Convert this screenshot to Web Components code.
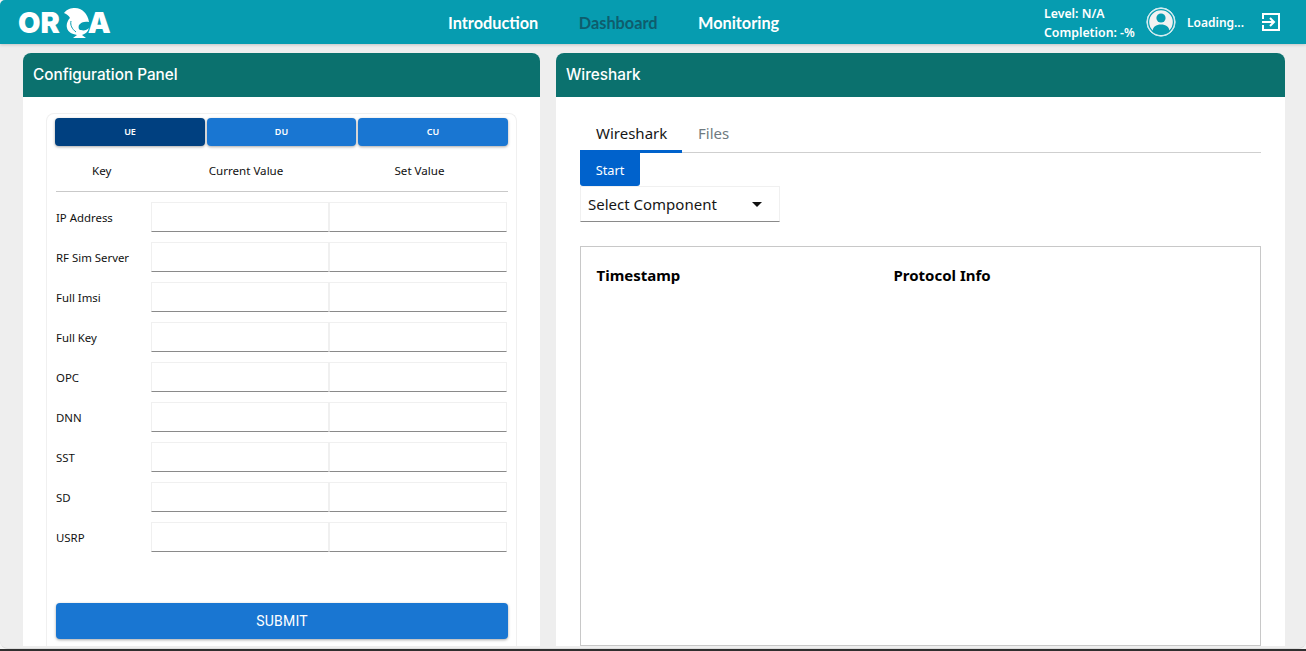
<!DOCTYPE html>
<html>
<head>
<meta charset="utf-8">
<title>ORCA</title>
<style>
 html, body { margin: 0; height: 100%; overflow: hidden; }
 body { font-family: "Noto Sans", sans-serif; background: linear-gradient(#f4f4f4 649px, #2f2f2f 649px); }
</style>
</head>
<body>
<app-shell>
 <top-bar slot="top"></top-bar>
 <panel-card title="Configuration Panel" style="width:517px">
  <config-form></config-form>
 </panel-card>
 <panel-card title="Wireshark" style="width:729px">
  <wireshark-view></wireshark-view>
 </panel-card>
</app-shell>
<script>
// Page frame: top bar plus a row of panels.
class AppShell extends HTMLElement {
 constructor() {
  super();
  this.attachShadow({mode: "open"}).innerHTML = `<style>
   :host { display: flex; flex-direction: column; height: 649px; background: #eeeeee; overflow: hidden;
    border-radius: 5px 0 8px 8px; box-sizing: border-box; border-bottom: 1px solid #dcdcdc; }
   main { display: flex; gap: 16px; padding: 9px 0 2px 23px; flex: 1; min-height: 0; }
  </style>
  <slot name="top"></slot>
  <main><slot></slot></main>`;
 }
}
customElements.define("app-shell", AppShell);

class TopBar extends HTMLElement {
 constructor() {
  super();
  this.attachShadow({mode: "open"}).innerHTML = `<style>
   :host { display: flex; align-items: center; height: 44px; flex: none; background: #069cb0; color: #fff;
    box-shadow: 0 1px 3px rgba(0,0,0,.18); position: relative; z-index: 1; }
   .logo { margin-left: 18px; display: flex; align-items: center; width: 96px; height: 36px; margin-top: 1px;
    font: 900 29px/36px "Inter", sans-serif; }
   .logo svg { display: block; margin: 0 -1px 0 2px; flex: none; }
   nav { position: absolute; left: 448px; top: 0; height: 44px; display: flex; align-items: center; gap: 40.5px;
    font: 700 16.3px Lato, sans-serif; }
   nav a:nth-child(2) { color: #0e5d6d; }
   .right { margin-left: auto; display: flex; align-items: center; font: 600 12px "Noto Sans", sans-serif; }
   .level { line-height: 19px; width: 102px; font-size: 12.3px; padding-top: 2px; }
   .name { margin-left: 11px; width: 75px; }
   .right svg { display: block; }
   .exit { margin-right: 24px; }
  </style>
  <div class="logo">
   <span>OR</span>
   <svg width="27" height="30" viewBox="0 0 27 30">
    <path fill="#fff" d="M2 5C5 1 9 0 13 0C20 0 26 6 27 14C23 13 19 14 17 17C16 20 17 22 19 22C22 23 25 22 27 20C26 24 23 26 20 27L24 30L11 30L15 27C10 26 6 24 5 20C4 16 6 12 8 10C7 8 5 6 2 5Z"/>
    <path fill="none" stroke="#069cb0" stroke-width="1" d="M9 13C8 17 10 21 14 24"/>
   </svg>
   <span>A</span>
  </div>
  <nav><a>Introduction</a><a>Dashboard</a><a>Monitoring</a></nav>
  <div class="right">
   <div class="level">Level: N/A<br>Completion: -%</div>
   <svg width="30" height="30" viewBox="0 0 30 30">
    <circle cx="15" cy="15" r="14.2" fill="#e6f4f6" fill-opacity=".95" stroke="#cfe9ee" stroke-width="1"/>
    <circle cx="15" cy="15" r="12.4" fill="#f2f2f2" stroke="#069cb0" stroke-width="1.2"/>
    <circle cx="15" cy="11" r="4.6" fill="#069cb0"/>
    <path fill="#069cb0" d="M6.5 24.5C7 19.5 10 17.5 15 17.5S23 19.5 23.5 24.5C21 26.5 18 27.4 15 27.4S9 26.5 6.5 24.5Z"/>
   </svg>
   <div class="name">Loading...</div>
   <svg class="exit" width="20" height="20" viewBox="0 0 20 20" fill="none" stroke="#fff" stroke-width="2">
    <path d="M1 7V2H17V18H1V13"/>
    <path d="M0 10H12"/>
    <path d="M8 6L12 10L8 14"/>
   </svg>
  </div>`;
 }
}
customElements.define("top-bar", TopBar);

class PanelCard extends HTMLElement {
 constructor() {
  super();
  this.attachShadow({mode: "open"}).innerHTML = `<style>
   :host { display: flex; flex-direction: column; flex: none; background: #fff; border-radius: 8px 8px 0 0; overflow: hidden; }
   header { height: 42px; padding-bottom: 2px; flex: none; background: #0b716e; color: #fff; display: flex; align-items: center;
    padding-left: 10px; font: 500 15.3px Inter, sans-serif; }
   section { flex: 1; min-height: 0; }
  </style>
  <header>${this.getAttribute("title")}</header>
  <section><slot></slot></section>`;
 }
}
customElements.define("panel-card", PanelCard);

class ConfigForm extends HTMLElement {
 constructor() {
  super();
  const keys = ["IP Address", "RF Sim Server", "Full Imsi", "Full Key", "OPC", "DNN", "SST", "SD", "USRP"];
  this.attachShadow({mode: "open"}).innerHTML = `<style>
   :host { display: block; height: 100%; margin: 16px 23px 0; box-sizing: border-box; padding: 4px 8px 0;
    border: 1px solid #f0f0f0; border-bottom: 0; border-radius: 8px 8px 0 0; color: #111; }
   .tabs { display: grid; grid-template-columns: 150px 149px 150px; gap: 2px; }
   button { border: 0; color: #fff; background: #1976d2; border-radius: 4px; height: 28px; padding: 0 0 2px;
    font: 600 9px "Noto Sans", sans-serif; box-shadow: 0 1px 3px rgba(0,0,0,.35); }
   button.on { background: #004080; }
   .head { display: grid; grid-template-columns: 95px 178px 178px; box-sizing: border-box; height: 46px; padding-top: 4px; align-items: center; text-align: center;
    font-size: 11.6px; border-bottom: 1px solid #c9c9c9; margin-left: 1px; }
   .head span:first-child { text-align: left; padding-left: 36px; }
   .head span:nth-child(2) { transform: translateX(6px); }
   .head span:nth-child(3) { transform: translateX(1.5px); }
   .rows { padding-top: 10px; display: grid; row-gap: 10px; margin-left: 1px; }
   .row { display: grid; grid-template-columns: 95px 178px 178px; height: 30px; align-items: center; font-size: 11.4px; }
   .submit { display: block; width: 452px; height: 36px; padding: 0; margin: 51px 0 0 1px; font: 400 14px Roboto, sans-serif; letter-spacing: .2px; }
  </style>
  <div class="tabs"><button class="on">UE</button><button>DU</button><button>CU</button></div>
  <div class="head"><span>Key</span><span>Current Value</span><span>Set Value</span></div>
  <div class="rows">${keys.map(k => `<div class="row"><span>${k}</span><field-box></field-box><field-box></field-box></div>`).join("")}</div>
  <button class="submit">SUBMIT</button>`;
 }
}
customElements.define("config-form", ConfigForm);

// Underlined empty input box, also used for the select.
class FieldBox extends HTMLElement {
 constructor() {
  super();
  this.attachShadow({mode: "open"}).innerHTML = `<style>
   :host { display: flex; align-items: center; box-sizing: border-box; height: 30px; background: #fff;
    border: 1px solid #f0f0f0; border-bottom: 1px solid #8a8a8a; }
  </style><slot></slot>`;
 }
}
customElements.define("field-box", FieldBox);

class WiresharkView extends HTMLElement {
 constructor() {
  super();
  this.attachShadow({mode: "open"}).innerHTML = `<style>
   :host { display: block; height: 100%; padding: 24px 24px 0; box-sizing: border-box; color: #161616; }
   .tabs { display: flex; height: 32px; border-bottom: 1px solid #cfcfcf; font-size: 15px; box-sizing: border-box; }
   .tabs span { padding: 0 16px; line-height: 25px; color: #6f7a80; }
   .tabs span.on { color: #161616; border-bottom: 3px solid #0062cc; height: 29px; margin-bottom: -1px; width: 70px; }
   .start { display: block; width: 60px; height: 33px; border: 0; padding: 1px 0 0; background: #0062cc; color: #fff; border-radius: 0 0 3px 3px;
    font: 12.8px "Noto Sans", sans-serif; }
   field-box { width: 200px; height: 36px; padding: 0 7px; font-size: 15px; justify-content: space-between; }
   .caret { width: 0; height: 0; border: 5.5px solid transparent; border-top: 5px solid #111; border-bottom: 0; margin-right: 10px; }
   .log { box-sizing: border-box; height: 400px; margin-top: 24px; border: 1px solid #c8c8c8; display: grid;
    grid-template-columns: 297px 1fr; padding: 18px 15.5px 0; font-size: 15px; font-weight: 700; color: #000; align-content: start; }
  </style>
  <div class="tabs"><span class="on">Wireshark</span><span>Files</span></div>
  <button class="start">Start</button>
  <field-box>Select Component<i class="caret"></i></field-box>
  <div class="log"><span>Timestamp</span><span>Protocol Info</span></div>`;
 }
}
customElements.define("wireshark-view", WiresharkView);
</script>
</body>
</html>
